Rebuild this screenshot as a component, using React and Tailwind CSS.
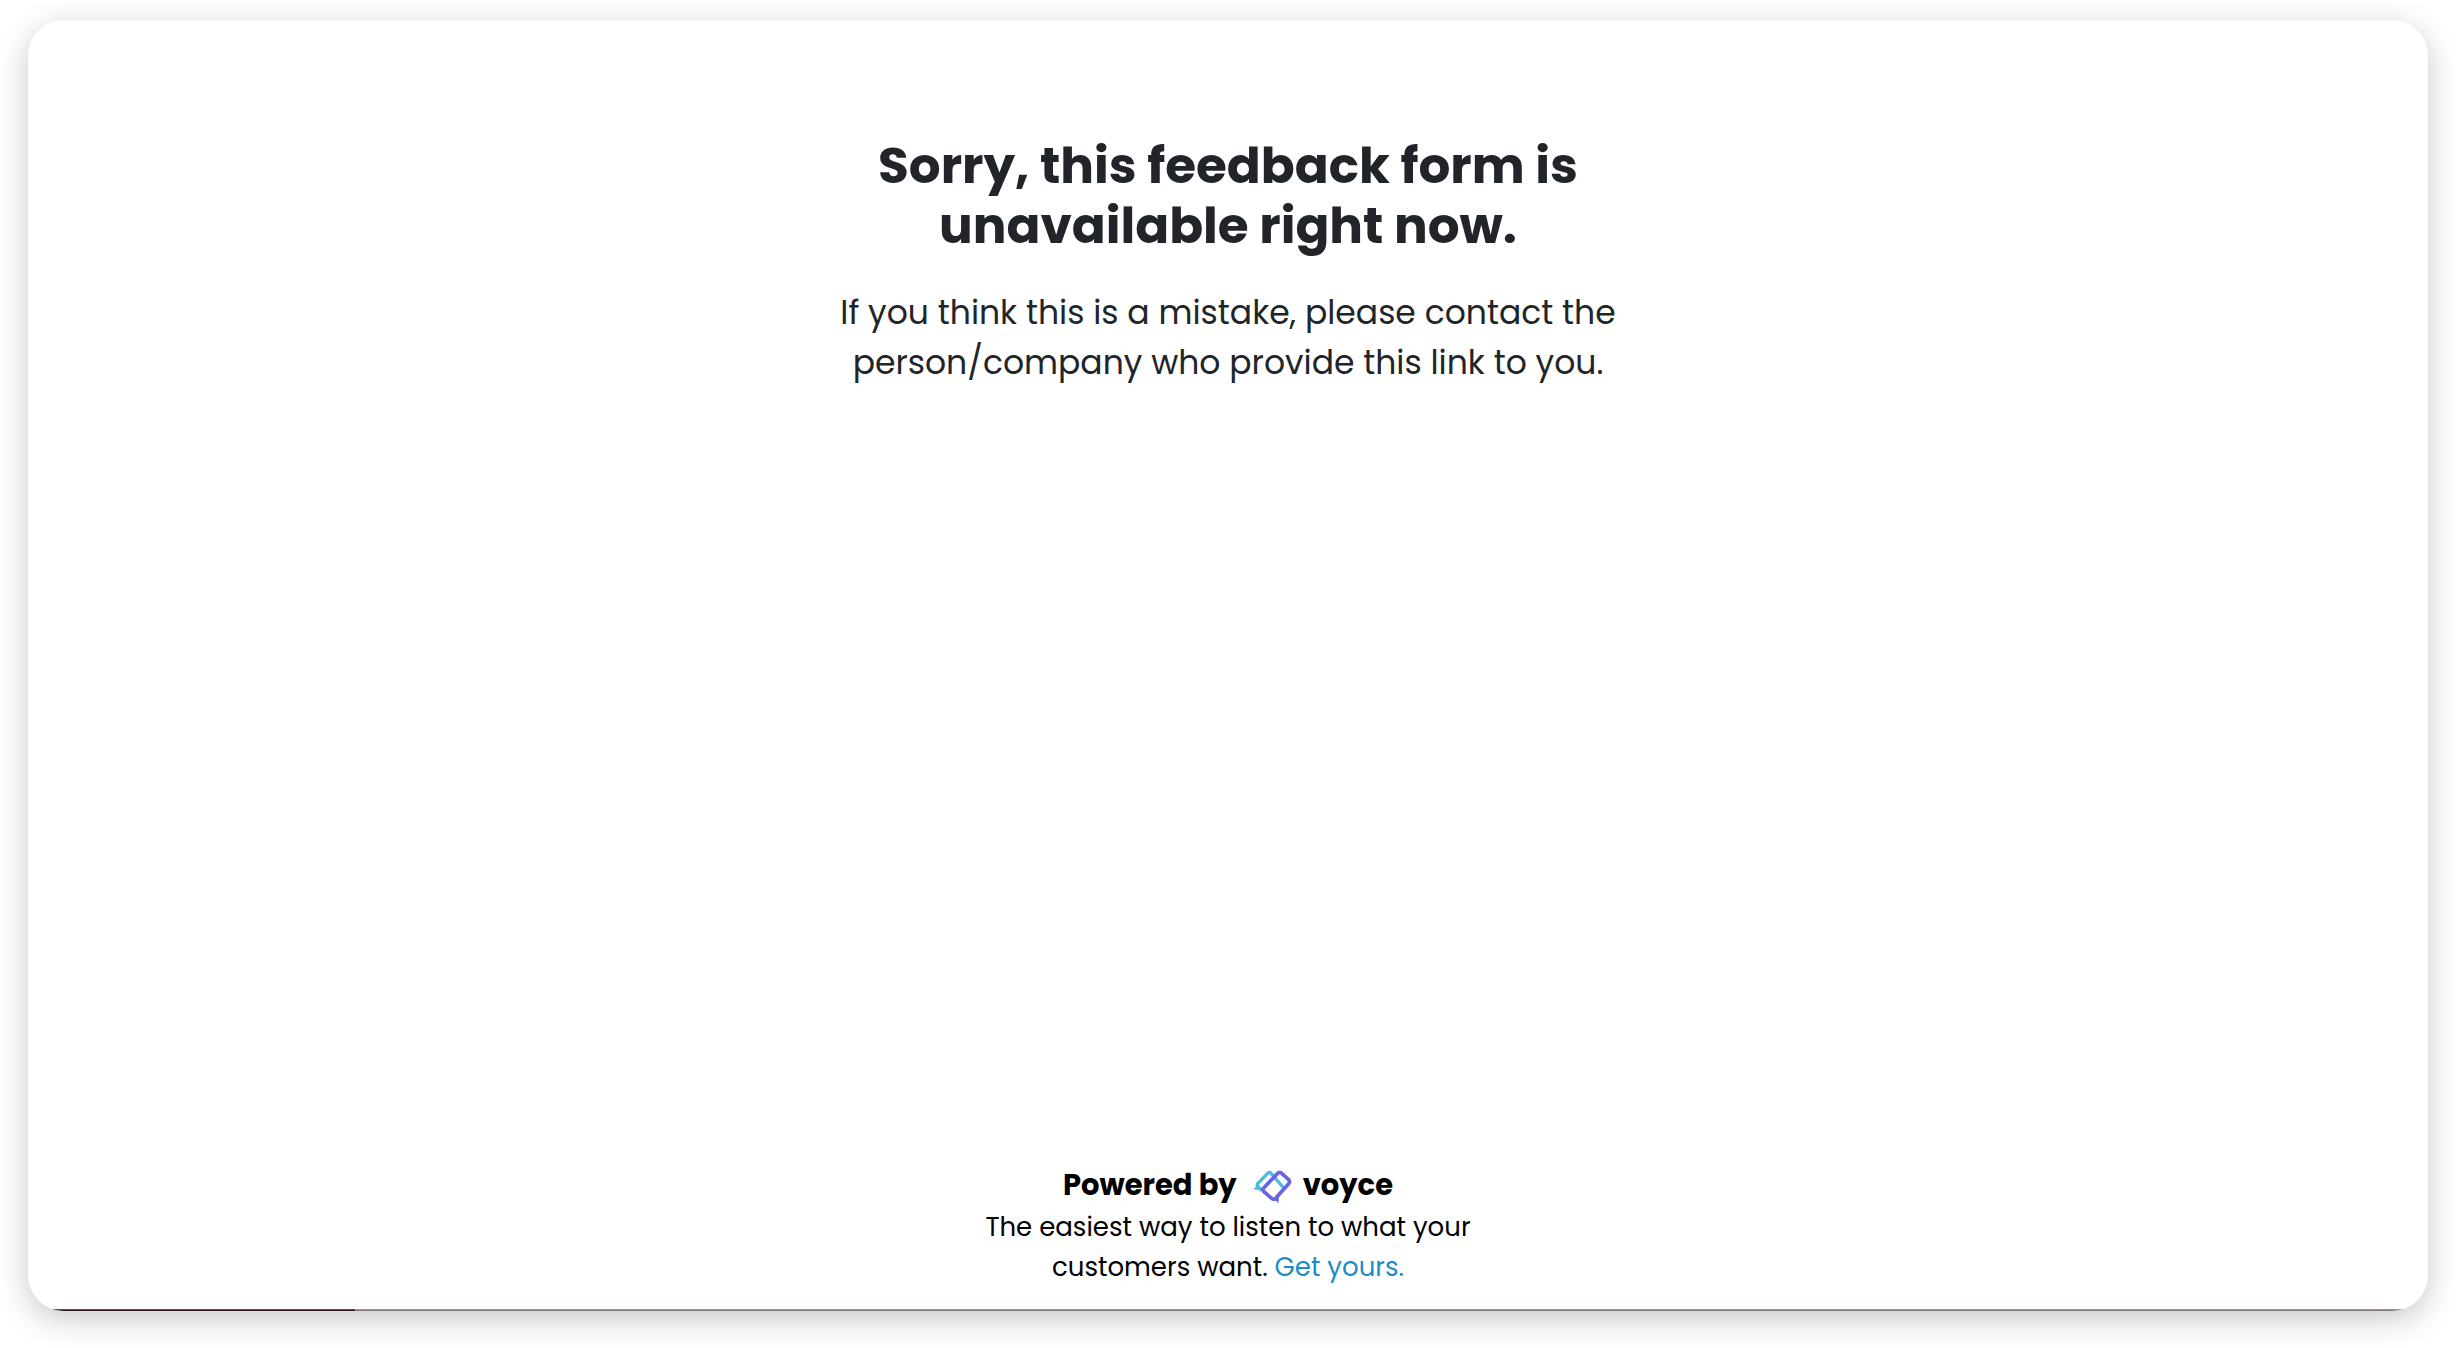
function VoyceLogo({ className }) {
  return (
    <svg viewBox="0 0 150 120" fill="none" className={className} aria-hidden="true">
      {/* back bubble */}
      <path
        d="M104 66 L67 23 Q62 17 56 22 L27 52 Q22 58 28 63 L38 73"
        stroke="#50b9e2"
        strokeWidth="10"
        strokeLinejoin="round"
      />
      <path d="M11 69 Q21 67 22 55 L42 69 L38 74 Z" fill="#50b9e2" />
      {/* front bubble */}
      <path
        d="M44 66 L86 22 Q92 16 98 22 L119 41 Q124 47 119 53 L80 97 Q74 102 68 97 L44 76 Q39 71 44 66 Z"
        stroke="#6864e3"
        strokeWidth="11"
        strokeLinejoin="round"
      />
      <path d="M72 103 L90 90 L88 114 Q86 104 72 103 Z" fill="#6864e3" />
    </svg>
  );
}

export default function App() {
  return (
    <div className="flex min-h-screen bg-white px-7 pt-5 pb-[37px] font-[Poppins,Inter,sans-serif]">
      <main className="flex grow flex-col items-center overflow-hidden rounded-[36px] bg-white text-center shadow-[0_8px_32px_rgba(0,0,0,0.22)]">
        <section className="flex max-w-[800px] grow flex-col gap-8 pt-[116px] text-[#212529]">
          <h1 className="text-[50px] leading-[60px] font-bold">
            Sorry, this feedback form is unavailable right now.
          </h1>
          <p className="text-[33px] leading-[50px]">
            If you think this is a mistake, please contact the person/company who provide this link to you.
          </p>
        </section>

        <footer className="flex max-w-[520px] flex-col items-center pb-[22px] text-black">
          <div className="flex items-center text-[29px] leading-[44px] font-bold">
            <span>Powered by</span>
            <VoyceLogo className="mt-0.5 mr-1 ml-3 h-10 w-[50px]" />
            <span>voyce</span>
          </div>
          <p className="text-[26px] leading-10">
            The easiest way to listen to what your customers want.{" "}
            <a href="#" className="text-[#1c8cc9]">
              Get yours.
            </a>
          </p>
        </footer>

        {/* progress */}
        <div className="h-0.5 w-full bg-linear-to-b from-[#a8a3a6] to-[#746b70]">
          <div className="h-full w-[327px] bg-linear-to-b from-[#705f67] to-[#1d0712]" />
        </div>
      </main>
    </div>
  );
}
